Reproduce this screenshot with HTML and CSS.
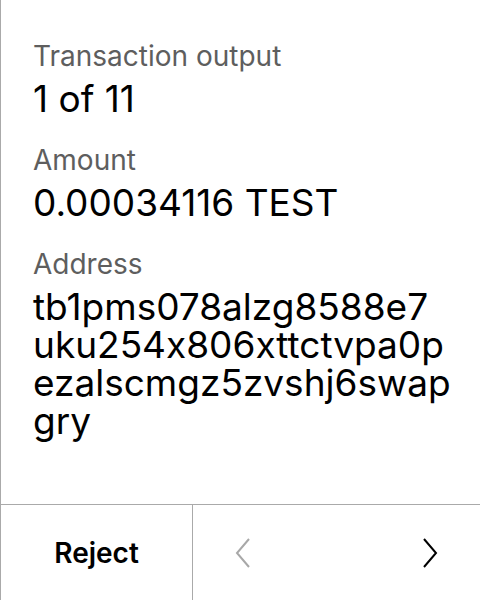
FILE: index.html
```html
<!DOCTYPE html>
<html>
<head>
<meta charset="utf-8">
<link rel="stylesheet" href="styles.css">
</head>
<body>
<div class="screen">
  <div class="content">
    <div class="field">
      <div class="label">Transaction output</div>
      <div class="value">1 of 11</div>
    </div>
    <div class="field">
      <div class="label">Amount</div>
      <div class="value">0.00034116 TEST</div>
    </div>
    <div class="field">
      <div class="label">Address</div>
      <div class="value address"><span class="chunk">tb1pms078alzg8588e7</span><span class="chunk">uku254x806xttctvpa0p</span><span class="chunk">ezalscmgz5zvshj6swap</span><span class="chunk">gry</span></div>
    </div>
  </div>
  <div class="actions">
    <div class="reject">Reject</div>
    <div class="nav">
      <div class="navbtn">
        <svg width="16" height="32" viewBox="0 0 16 32"><path d="M14 2 L2 16 L14 30" fill="none" stroke="#a8a8a8" stroke-width="2"/></svg>
      </div>
      <div class="navbtn">
        <svg width="16" height="32" viewBox="0 0 16 32"><path d="M2 2 L14 16 L2 30" fill="none" stroke="#000" stroke-width="2"/></svg>
      </div>
    </div>
  </div>
</div>
</body>
</html>
```

FILE: styles.css
```css
html, body {
  margin: 0;
  padding: 0;
  background: #fff;
}
body {
  font-family: Inter, "Noto Sans", sans-serif;
  font-feature-settings: "calt" 0;
  color: #000;
}
.screen {
  width: 480px;
  height: 600px;
  box-sizing: border-box;
  border-left: 1px solid #aaa;
  display: flex;
  flex-direction: column;
}
.content {
  flex: 1;
  padding: 39px 16px 0 32px;
  display: flex;
  flex-direction: column;
  gap: 25px;
}
.label {
  font-size: 28px;
  line-height: 34px;
  color: #5e5e5e;
}
.value {
  font-size: 37px;
  line-height: 38px;
  margin-top: 7px;
}
.address .chunk {
  display: block;
}
.actions {
  height: 96px;
  border-top: 1px solid #aaa;
  box-sizing: border-box;
  display: flex;
}
.reject {
  width: 191px;
  border-right: 1px solid #aaa;
  display: flex;
  align-items: center;
  justify-content: center;
  font-size: 28px;
  font-weight: 600;
}
.nav {
  flex: 1;
  display: flex;
  justify-content: space-between;
  align-items: center;
}
.navbtn {
  width: 100px;
  display: flex;
  justify-content: center;
  align-items: center;
}
```
